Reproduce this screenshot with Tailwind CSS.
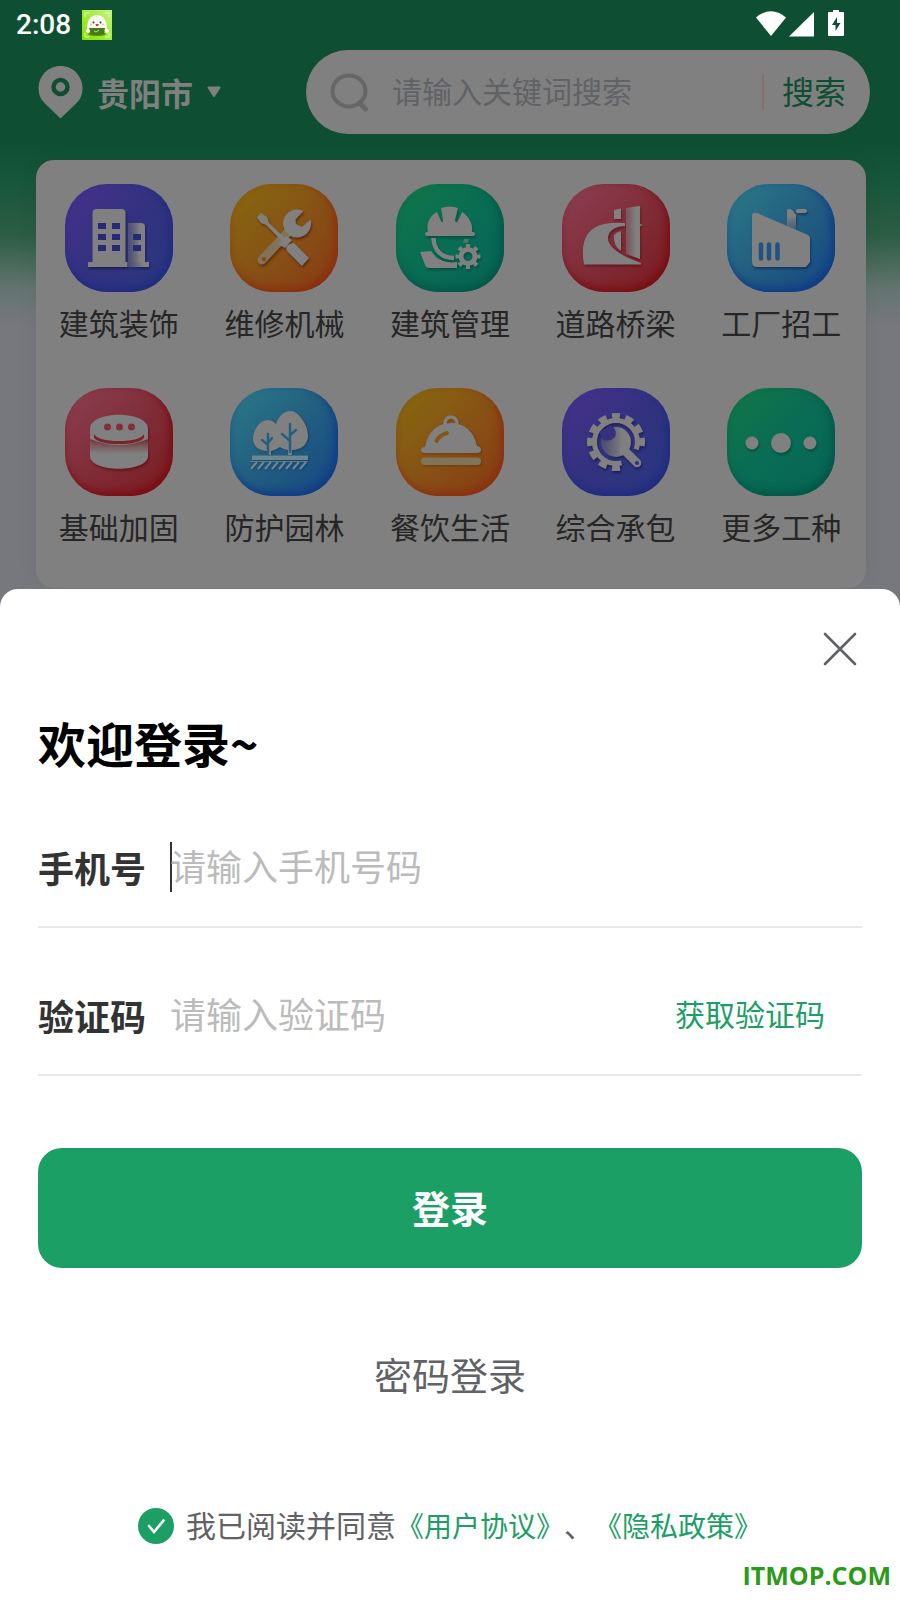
<!DOCTYPE html>
<html lang="zh-CN">
<head>
<meta charset="utf-8">
<meta name="viewport" content="width=device-width, initial-scale=1">
<title>欢迎登录</title>
<script src="https://cdn.jsdelivr.net/npm/@tailwindcss/browser@4"></script>
</head>
<body class="font-['Noto_Sans_CJK_SC',sans-serif]">
<div class="flex min-h-screen flex-col bg-[#77777e] bg-[linear-gradient(to_bottom,#0e4f33_0,#0e4f33_140px,#17563a_180px,#2c5d44_235px,#647570_290px,#77777e_325px)]">

  <!-- status bar -->
  <div class="flex h-[50px] items-center justify-between pr-14 pl-4 text-white">
    <div class="flex items-center gap-[11px]">
      <span class="font-['Roboto',sans-serif] text-[28px] leading-8 font-medium">2:08</span>
      <svg class="size-[30px]" viewBox="0 0 30 30" aria-hidden="true">
        <defs><linearGradient id="app" x1="0" y1="1" x2="1" y2="0"><stop offset="0" stop-color="#86df00"/><stop offset="1" stop-color="#c4f57c"/></linearGradient></defs>
        <rect width="30" height="30" fill="url(#app)"/>
        <path d="M3 7V3h4M23 3h4v4M3 23v4h4M27 23v4h-4" fill="none" stroke="#dcffb0"/>
        <ellipse cx="15" cy="24" rx="9" ry="2" fill="#4f9a10"/>
        <path d="M5 19C5 10 9 5 15 5s10 5 10 14c0 4-20 4-20 0z" fill="#f7faf0"/>
        <path d="M7 18h16l-1 6q-7 2-14 0z" fill="#497a18"/>
        <circle cx="6" cy="21" r="2" fill="#fff"/><circle cx="25" cy="21" r="2" fill="#fff"/>
        <circle cx="11.500" cy="12.500" r="1" fill="#333"/><circle cx="18.500" cy="12.500" r="1" fill="#333"/>
        <path d="M13.500 14h3.500l-1 2h-2z" fill="#e0402c"/><circle cx="9" cy="14.500" r="1" fill="#f9b9ad"/><circle cx="21" cy="14.500" r="1" fill="#f9b9ad"/>
        <path d="M12 21l2 1 3-2" stroke="#b7dc82" fill="none"/>
      </svg>
    </div>
    <svg class="mb-1 h-[27px] w-[88px]" viewBox="0 0 88 27" fill="#fff" aria-hidden="true">
      <path d="M0 7.500Q15-5 30 7.500L15 26z"/>
      <path d="M33 26.500L58 2v24.500z"/>
      <path d="M77 0h6v2h4q1 0 1 1v22q0 1-1 1H73q-1 0-1-1V3q0-1 1-1h4z"/>
      <path d="M81 7l-5 8h3.500v6l5-8H81z" fill="#0e4f33"/>
    </svg>
  </div>

  <!-- location and search -->
  <header class="flex h-[84px] items-center justify-between pr-[30px] pl-[38px]">
    <button type="button" class="flex items-center gap-3.5 text-[32px] leading-10 font-bold text-[#808080]">
      <svg class="h-[53px] w-[45px]" viewBox="0 0 45 53" aria-hidden="true">
        <path d="M22.500 0C10 0 .5 10 .5 22.500c0 6 2 10.500 6 14.500l16 15.500 16-15.500c4-4 6-8.500 6-14.500C44.500 10 35 0 22.500 0z" fill="#808080"/>
        <circle cx="22.500" cy="21" r="7" fill="#808080" stroke="#0e4f33" stroke-width="4.500"/>
      </svg>
      <span>贵阳市</span>
      <svg class="h-3 w-3.5" viewBox="0 0 14 12" aria-hidden="true"><path d="M1.500 1.500h11L7 10z" fill="#808080" stroke="#808080" stroke-width="2" stroke-linejoin="round"/></svg>
    </button>
    <form class="flex h-[84px] w-[564px] items-center rounded-full bg-[#808080] pr-6 pl-6" onsubmit="return false">
      <svg class="h-10 w-[39px] shrink-0" viewBox="0 0 39 40" fill="none" stroke="#666" aria-hidden="true">
        <ellipse cx="19" cy="19" rx="16.500" ry="15.500" stroke-width="4"/><path d="M29.500 31l6 6" stroke-width="5" stroke-linecap="round"/>
      </svg>
      <input type="search" aria-label="搜索关键词" placeholder="请输入关键词搜索" class="ml-[23px] h-12 min-w-0 flex-1 bg-transparent pb-1 text-[30px] leading-[44px] text-[#606266] outline-none placeholder:text-[#606266]">
      <span class="h-9 w-0.5 rounded bg-[#85706a]"></span>
      <button type="submit" class="ml-[18px] pb-1 text-[32px] leading-[44px] text-[#0e4f33]">搜索</button>
    </form>
  </header>

  <!-- shared icon gradients -->
  <svg class="absolute size-0" aria-hidden="true">
    <defs>
      <linearGradient id="right"><stop offset="0" stop-color="#808080" stop-opacity=".35"/><stop offset=".7" stop-color="#808080"/></linearGradient>
      <linearGradient id="down" x1="0" y1="0" x2="0" y2="1"><stop offset="0" stop-color="#808080" stop-opacity=".1"/><stop offset=".5" stop-color="#808080"/></linearGradient>
      <linearGradient id="up" x1="0" y1="1" x2="0" y2="0"><stop offset="0" stop-color="#808080" stop-opacity=".2"/><stop offset=".7" stop-color="#808080"/></linearGradient>
    </defs>
  </svg>

  <!-- job categories -->
  <nav aria-label="工种分类" class="mt-[26px] mr-[34px] ml-9 grid h-[428px] grid-cols-5 content-start gap-y-5 rounded-[18px] bg-[#808080] pt-6 pr-0.5 text-[30px] leading-[44px] text-[#262626] shadow-[0_0_20px_rgba(0,0,0,0.06)]">
    <a href="#" class="flex h-[184px] flex-col items-center gap-2">
      <span class="size-[108px] rounded-[42px] bg-linear-to-br from-[#48308c] via-[#32327f] to-[#28387f] shadow-[inset_-3px_-4px_8px_#1f2b80]">
        <svg class="size-full drop-shadow-[1px_2px_1px_rgba(0,0,30,0.4)]" viewBox="0 0 108 108" fill="#808080" aria-hidden="true">
          <path d="M63 39h13q4 0 4 4v35H63z" fill="url(#right)"/>
          <path d="M27.500 78V29q0-4 4-4h25q4 0 4 4v49h2v5H23v-5z"/><path d="M63 78h21v5H63z" fill="url(#right)"/>
          <path d="M33 39h8v6h-8zM47 39h8v6h-8zM33 50h8v6h-8zM47 50h8v6h-8zM33 61h8v6h-8zM47 61h8v6h-8zM68 50h8v6h-8zM68 61h8v6h-8z" fill="#26297a"/>
        </svg>
      </span>
      <span>建筑装饰</span>
    </a>
    <a href="#" class="flex h-[184px] flex-col items-center gap-2">
      <span class="size-[108px] rounded-[42px] bg-linear-to-br from-[#856a0e] via-[#875215] to-[#873a14] shadow-[inset_-3px_-4px_8px_#8a2f10]">
        <svg class="size-full drop-shadow-[1px_2px_1px_rgba(60,10,0,0.5)]" viewBox="0 0 108 108" fill="#808080" aria-hidden="true">
          <path d="M62 44L32 76" stroke="#80735a" stroke-width="9" stroke-linecap="round"/>
          <circle cx="34" cy="75" r="2.300" fill="#874a15"/>
          <path d="M73.500 27l-8 8.500.5 4.500 6 3 8.500-7.500A14 14 0 1 1 73.500 27z"/>
          <path d="M48 60l8-8 6 4-7 8z"/>
          <path d="M27 33l4-4 6 4 2 6 20 19-3 3-20-20-5-2z"/>
          <path d="M64 59l15 15-7 8-15-15q-2-4 1-6t6-2z"/>
        </svg>
      </span>
      <span>维修机械</span>
    </a>
    <a href="#" class="flex h-[184px] flex-col items-center gap-2">
      <span class="size-[108px] rounded-[42px] bg-linear-to-br from-[#117746] via-[#096c54] to-[#056657] shadow-[inset_-3px_-4px_8px_#045546]">
        <svg class="size-full drop-shadow-[1px_2px_1px_rgba(0,40,30,0.4)]" viewBox="0 0 108 108" fill="#808080" aria-hidden="true">
          <path d="M32 48C30 39 34 32 41 28l4 9q2 3 2-1l-2-12q9-3 17 0l-3 12q1 4 3 1l4-9c8 5 11 13 10 20h1q2 0 2 2t-2 2H31q-2 0-2-2t2-2z"/>
          <path d="M37.500 54C38 66 45 74 58 74" fill="none" stroke="#808080" stroke-width="4.500"/>
          <path d="M68 55h5l-1 4h-5z" opacity=".6"/>
          <path d="M24 68l11-1 5 6q8 7 21 5v6H33q-3 0-4-3z"/>
          <circle cx="72" cy="72.500" r="7" fill="none" stroke="#808080" stroke-width="5"/>
          <circle cx="72" cy="72.500" r="10.500" fill="none" stroke="#808080" stroke-width="4" pathLength="16" stroke-dasharray="1 1" stroke-dashoffset=".5"/>
        </svg>
      </span>
      <span>建筑管理</span>
    </a>
    <a href="#" class="flex h-[184px] flex-col items-center gap-2">
      <span class="size-[108px] rounded-[42px] bg-linear-to-br from-[#8b4054] via-[#802d38] to-[#7c191e] shadow-[inset_-3px_-4px_8px_#780d12]">
        <svg class="size-full drop-shadow-[1px_2px_1px_rgba(60,0,0,0.4)]" viewBox="0 0 108 108" fill="#808080" aria-hidden="true">
          <path d="M22 80.500C18 59 24 44 42 40q10-2 21-1v3c-8 0-17 4-17 12 0 10 14 18 33 25v1.500z"/>
          <path d="M52 26l7-1.500V35h-7z"/><path d="M52 51q3-3 7-4v20q-8-5-7-16z"/>
          <path d="M64 24l14-2v53l-14-5z" fill="url(#right)"/><path d="M64 24l14-2v53l-14-5z" opacity=".25"/><path d="M78 40l3 1-3 1z"/>
        </svg>
      </span>
      <span>道路桥梁</span>
    </a>
    <a href="#" class="flex h-[184px] flex-col items-center gap-2">
      <span class="size-[108px] rounded-[42px] bg-linear-to-br from-[#2c7a86] via-[#225e80] to-[#174684] shadow-[inset_-3px_-4px_8px_#113a86]">
        <svg class="size-full drop-shadow-[1px_2px_1px_rgba(0,10,50,0.4)]" viewBox="0 0 108 108" fill="#808080" aria-hidden="true">
          <path d="M60 26q3-2 5 0l4 5v18l-9-4z" fill="url(#up)"/><rect x="69" y="25" width="11" height="4" rx="2"/>
          <path d="M25 32q0-4 5-3l51 22q2 1 2 4v23l-4 5H30q-5 0-5-5z"/>
          <path d="M34 60.500v14M42 60.500v14M50.500 60.500v14" stroke="#1f5382" stroke-width="4.500" stroke-linecap="round"/>
        </svg>
      </span>
      <span>工厂招工</span>
    </a>
    <a href="#" class="flex h-[184px] flex-col items-center gap-2">
      <span class="size-[108px] rounded-[42px] bg-linear-to-br from-[#8b4054] via-[#802d38] to-[#7c191e] shadow-[inset_-3px_-4px_8px_#780d12]">
        <svg class="size-full drop-shadow-[1px_2px_1px_rgba(60,0,0,0.4)]" viewBox="0 0 108 108" fill="#808080" aria-hidden="true">
          <path d="M25 50q29 13 58 0v18c0 17-58 17-58 0z" fill="url(#down)"/>
          <path d="M25 41c0-19 58-19 58 0v10q-29 12-58 0z"/>
          <path d="M29 46q4 7 25 7t25-7v4q-6 6-25 6t-25-6z" fill="#7d2229"/>
          <circle cx="42.500" cy="39" r="3.500" fill="#832f3b"/><circle cx="54.500" cy="39" r="3.500" fill="#832f3b"/><circle cx="66.500" cy="39" r="3.500" fill="#832f3b"/>
        </svg>
      </span>
      <span>基础加固</span>
    </a>
    <a href="#" class="flex h-[184px] flex-col items-center gap-2">
      <span class="size-[108px] rounded-[42px] bg-linear-to-br from-[#2c7a86] via-[#225e80] to-[#174684] shadow-[inset_-3px_-4px_8px_#113a86]">
        <svg class="size-full drop-shadow-[1px_1px_1px_rgba(0,10,50,0.3)]" viewBox="0 0 108 108" fill="#808080" aria-hidden="true">
          <path d="M38 32q4 0 8 4c3-8 8-13 14-13 9 0 18 14 18 25 0 9-8 14-16 14v5h-4v-5q-4 0-8-3-4 3-9 4v4h-4v-4c-8 0-14-5-14-12 0-8 6-19 15-19z"/>
          <path d="M38 46v20M32 52l6 5M42 50l-4 5M60 36v28M52 46l8 7M66 42l-6 5" fill="none" stroke="#255f80" stroke-width="2.500" stroke-linecap="round"/>
          <path d="M22 67.500h56V72H22z" fill="#6c878d"/><path d="M20 73.500h58" stroke="#5c7f8c" stroke-width="1"/>
          <path d="M21 81l6-7M28 81l6-7M35 81l6-7M42 81l6-7M49 81l6-7M56 81l6-7M63 81l6-7M70 81l6-7" stroke="#708790" stroke-width="2"/>
        </svg>
      </span>
      <span>防护园林</span>
    </a>
    <a href="#" class="flex h-[184px] flex-col items-center gap-2">
      <span class="size-[108px] rounded-[42px] bg-linear-to-br from-[#856a0e] via-[#875215] to-[#873a14] shadow-[inset_-3px_-4px_8px_#8a2f10]">
        <svg class="size-full drop-shadow-[1px_1px_1px_rgba(60,10,0,0.3)]" viewBox="0 0 108 108" fill="#808080" aria-hidden="true">
          <circle cx="55" cy="35" r="6" fill="none" stroke="#808080" stroke-width="3.500"/>
          <path d="M29 59c3-16 13-24 26-24s23 8 26 23q4 1 4 4 0 3-4 3H29q-4 0-4-3t4-3z"/>
          <path d="M40.500 53q3-6 10.500-8" fill="none" stroke="#875515" stroke-width="4" stroke-linecap="round"/>
          <rect x="25" y="69.500" width="60" height="7.500" rx="3.500" fill="#80755a"/>
        </svg>
      </span>
      <span>餐饮生活</span>
    </a>
    <a href="#" class="flex h-[184px] flex-col items-center gap-2">
      <span class="size-[108px] rounded-[42px] bg-linear-to-br from-[#48308c] via-[#32327f] to-[#28387f] shadow-[inset_-3px_-4px_8px_#1f2b80]">
        <svg class="size-full drop-shadow-[1px_2px_1px_rgba(0,0,30,0.4)]" viewBox="0 0 108 108" fill="none" aria-hidden="true">
          <circle cx="54" cy="54" r="21.500" stroke="#808080" stroke-width="5" pathLength="360" stroke-dasharray="20 55 285 0"/>
          <circle cx="54" cy="54" r="26" stroke="#808080" stroke-width="6" pathLength="360" stroke-dasharray="9 72 18 12 18 12 18 12 18 12 18 12 18 12 18 12 18 12 18 12 9 0"/>
          <circle cx="54" cy="54" r="15" fill="url(#right)"/>
          <path d="M62 62l13 13" stroke="#808080" stroke-width="8.500" stroke-linecap="round"/>
          <path d="M37 44l12-7q7 6 4 12-6 6-13 2z" fill="#35317f"/>
          <circle cx="75" cy="75" r="2" fill="#28307a"/>
        </svg>
      </span>
      <span>综合承包</span>
    </a>
    <a href="#" class="flex h-[184px] flex-col items-center gap-2">
      <span class="size-[108px] rounded-[42px] bg-linear-to-br from-[#117746] via-[#096c54] to-[#056657] shadow-[inset_-3px_-4px_8px_#045546]">
        <svg class="size-full drop-shadow-[1px_2px_1px_rgba(0,40,30,0.4)]" viewBox="0 0 108 108" fill="#808080" aria-hidden="true">
          <circle cx="25" cy="55" r="6.500"/><circle cx="54" cy="55" r="10"/><circle cx="83" cy="55" r="6.500"/>
        </svg>
      </span>
      <span>更多工种</span>
    </a>
  </nav>

  <!-- login sheet -->
  <main class="mt-px flex flex-1 flex-col rounded-t-[18px] bg-white px-[38px]">
    <button type="button" aria-label="关闭" class="mt-[42px] mr-1 self-end">
      <svg class="size-9" viewBox="0 0 36 36" fill="none" stroke="#606266" stroke-width="2.600" stroke-linecap="round" aria-hidden="true"><path d="M3 3l30 30M33 3L3 33"/></svg>
    </button>
    <h1 class="mt-10 text-[48px] leading-[70px] font-bold text-black">欢迎登录~</h1>
    <form class="flex flex-col" onsubmit="return false">
      <div class="mt-[31px] flex h-[120px] items-center border-b-2 border-[#e8e8e8] text-[36px] leading-[50px]">
        <label for="phone" class="w-[132px] font-bold text-[#333]">手机号</label>
        <span class="-mr-0.5 h-[50px] w-0.5 bg-[#333]"></span>
        <input id="phone" type="tel" placeholder="请输入手机号码" class="h-[54px] min-w-0 flex-1 pb-1 text-[#333] caret-transparent outline-none placeholder:text-[#bbb]">
      </div>
      <div class="mt-7 flex h-[120px] items-center border-b-2 border-[#e8e8e8] text-[36px] leading-[50px]">
        <label for="code" class="w-[132px] font-bold text-[#333]">验证码</label>
        <input id="code" type="text" inputmode="numeric" placeholder="请输入验证码" class="h-[54px] min-w-0 flex-1 pb-1 text-[#333] outline-none placeholder:text-[#bbb]">
        <button type="button" class="mr-[37px] pb-1 text-[30px] text-[#1b9f65]">获取验证码</button>
      </div>
      <button type="submit" class="mt-[72px] h-[120px] rounded-3xl bg-[#1b9f65] pb-1 text-[38px] font-bold text-white">登录</button>
    </form>
    <button type="button" class="mt-[79px] self-center text-[38px] leading-[54px] text-[#606266]">密码登录</button>
    <div class="mt-[101px] flex items-center justify-center gap-3 text-[30px] leading-[44px] text-[#606266]">
      <span class="grid size-9 shrink-0">
        <input id="agree" type="checkbox" checked class="col-start-1 row-start-1 size-9 appearance-none rounded-full bg-[#1b9f65]">
        <svg class="pointer-events-none col-start-1 row-start-1 size-9" viewBox="0 0 36 36" fill="none" stroke="#fff" stroke-width="2.600" stroke-linecap="round" aria-hidden="true"><path d="M11 18l5 6 9.500-11.500"/></svg>
      </span>
      <p class="pb-0.5 [text-spacing-trim:space-all]"><label for="agree">我已阅读并同意</label><a href="#" class="text-[28px] text-[#1b9f65]">《用户协议》</a>、<a href="#" class="text-[28px] text-[#1b9f65]">《隐私政策》</a></p>
    </div>
    <p class="mt-2.5 -mr-[29px] self-end font-['Open_Sans',sans-serif] text-[25px] leading-8 font-bold text-[#2a9a18]">ITMOP.COM</p>
  </main>
</div>
</body>
</html>
